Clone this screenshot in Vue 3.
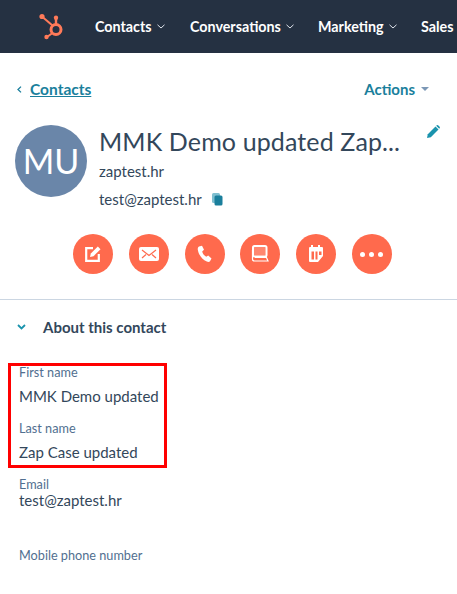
<template>
  <div class="page">
    <nav class="topbar">
      <svg class="logo" width="28" height="28" viewBox="0 0 28 28">
        <circle cx="18" cy="16.500" r="5" fill="none" stroke="#ff7a59" stroke-width="3" />
        <line x1="4.500" y1="4" x2="14.500" y2="12.500" stroke="#ff7a59" stroke-width="2" />
        <circle cx="4" cy="3.500" r="2.600" fill="#ff7a59" />
        <line x1="18" y1="6" x2="18" y2="11" stroke="#ff7a59" stroke-width="2.400" />
        <circle cx="18" cy="4.800" r="2.200" fill="#ff7a59" />
        <line x1="9" y1="24" x2="14.500" y2="20" stroke="#ff7a59" stroke-width="2" />
        <circle cx="8.500" cy="24" r="2.200" fill="#ff7a59" />
      </svg>
      <div v-for="item in navItems" :key="item.label" class="nav-item" :style="{ width: item.width + 'px' }">
        <span>{{ item.label }}</span>
        <svg v-if="item.arrow" width="8" height="5" viewBox="0 0 8 5">
          <path d="M.5.8 4 4 7.500.8" fill="none" stroke="#dfe3eb" stroke-width="1" />
        </svg>
      </div>
    </nav>

    <div class="crumbs">
      <div class="back">
        <svg width="5" height="7" viewBox="0 0 5 7">
          <path d="M4 .6 1 3.500 4 6.400" fill="none" stroke="#1a7f9c" stroke-width="1.300" />
        </svg>
        <a class="back-link">Contacts</a>
      </div>
      <div class="actions">
        <span>Actions</span>
        <svg width="8" height="4" viewBox="0 0 8 4"><path d="M0 0h8L4 4z" fill="#7c98b6" /></svg>
      </div>
    </div>

    <header class="profile">
      <div class="avatar">MU</div>
      <div class="identity">
        <h1>MMK Demo updated Zap...</h1>
        <p class="domain">zaptest.hr</p>
        <p class="mail">
          test@zaptest.hr
          <svg width="11" height="13" viewBox="0 0 11 13">
            <rect x="0" y="0" width="8" height="10" rx="1.500" fill="#7fbfd0" />
            <rect x="2.500" y="2.500" width="8" height="10" rx="1.500" fill="#1a7f9c" />
          </svg>
        </p>
      </div>
      <svg class="pencil" width="13" height="13" viewBox="0 0 13 13">
        <path d="M0 13l.8-3.800L8.500 1.500l3 3-7.700 7.700z" fill="#1a93ad" />
        <path d="M9.400.6a1.400 1.400 0 0 1 2 0l1 1a1.400 1.400 0 0 1 0 2l-.2.200-3-3z" fill="#1a93ad" />
      </svg>
    </header>

    <div class="quick-actions">
      <button class="circle">
        <svg width="18" height="18" viewBox="0 0 18 18">
          <path d="M9 3.200H2.200v12.600h12.600V9" fill="none" stroke="#fff" stroke-width="2.200" />
          <path d="M6 12l.8-3.500L13.800 1.500l2.700 2.700-7 7z" fill="#fff" />
        </svg>
      </button>
      <button class="circle">
        <svg width="20" height="14" viewBox="0 0 20 14">
          <rect width="20" height="14" rx="2" fill="#fff" />
          <path d="M3 3l7 5.500L17 3M3 11l4-3.500M17 11l-4-3.500" fill="none" stroke="#ff6a4d" stroke-width="1.200" />
        </svg>
      </button>
      <button class="circle">
        <svg width="16" height="18" viewBox="0 0 16 18">
          <path d="M2 1.500 5 .8l2 4-1.800 1.700c.5 2 2 4.300 4 5.300l2-1.300 3.300 3-1.500 2.800c-.7.800-2 .8-3.200.2C5 14.500 1.500 9.500.8 4.800.6 3.300 1 2 2 1.500z" fill="#fff" />
        </svg>
      </button>
      <button class="circle">
        <svg width="20" height="18" viewBox="0 0 20 18">
          <rect x="3" y="1" width="13.500" height="10.500" rx="1.500" fill="#ff6a4d" stroke="#fff" stroke-width="2" />
          <rect x="4" y="2" width="11.500" height="8.500" fill="#fff" opacity=".2" />
          <path d="M2.500 5v9a2 2 0 0 0 2 2H18l-1.500-3.500H5" fill="none" stroke="#fff" stroke-width="1.200" />
        </svg>
      </button>
      <button class="circle">
        <svg width="18" height="18" viewBox="0 0 18 18">
          <path d="M4 0h2v2h5V0h2v2h2a1 1 0 0 1 1 1v8l-5 6H3a1 1 0 0 1-1-1V3a1 1 0 0 1 1-1h1z" fill="#fff" />
          <path d="M4.500 6.500h2.500v8H4.500zM8.500 6.500h2v8h-2zM12 6.500h2.500v3.500H12z" fill="#ff6a4d" />
        </svg>
      </button>
      <button class="circle">
        <span class="dot"></span><span class="dot"></span><span class="dot"></span>
      </button>
    </div>

    <section class="about">
      <div class="about-head">
        <svg width="9" height="6" viewBox="0 0 9 6">
          <path d="M1 1l3.500 3.500L8 1" fill="none" stroke="#1a93ad" stroke-width="1.800" />
        </svg>
        <h2>About this contact</h2>
      </div>

      <div class="highlight">
        <div class="field">
          <label>First name</label>
          <div class="value">MMK Demo updated</div>
        </div>
        <div class="field second">
          <label>Last name</label>
          <div class="value">Zap Case updated</div>
        </div>
      </div>

      <div class="field email">
        <label>Email</label>
        <div class="value tight">test@zaptest.hr</div>
      </div>
      <div class="field phone">
        <label>Mobile phone number</label>
      </div>
    </section>
  </div>
</template>

<script setup>
const navItems = [
  { label: 'Contacts', width: 95, arrow: true },
  { label: 'Conversations', width: 128, arrow: true },
  { label: 'Marketing', width: 103, arrow: true },
  { label: 'Sales', width: 60, arrow: false },
]
</script>

<style>
html, body {
  margin: 0;
  overflow: hidden;
  background: #fff;
}
</style>

<style scoped>
.page {
  width: 457px;
  height: 594px;
  overflow: hidden;
  font-family: Lato, "Noto Sans", sans-serif;
  color: #33475b;
}

.topbar {
  display: flex;
  align-items: center;
  height: 53px;
  background: #253142;
  padding-left: 38px;
  box-sizing: border-box;
  white-space: nowrap;
}

.logo {
  flex: none;
  margin-right: 29px;
}

.nav-item {
  flex: none;
  display: flex;
  align-items: center;
  gap: 5px;
  color: #fff;
  font-size: 14.300px;
  font-weight: 700;
}

.crumbs {
  display: flex;
  justify-content: space-between;
  align-items: center;
  height: 20px;
  margin-top: 26px;
  padding: 0 28px 0 17px;
  font-size: 15.500px;
  font-weight: 700;
  color: #1a7f9c;
}

.back {
  display: flex;
  align-items: center;
  gap: 8px;
}

.back-link {
  text-decoration: underline;
}

.actions {
  display: flex;
  align-items: center;
  gap: 6px;
  font-size: 15px;
}

.profile {
  position: relative;
  display: flex;
  margin-top: 26px;
  padding-left: 15px;
  height: 90px;
}

.avatar {
  flex: none;
  width: 72px;
  height: 72px;
  border-radius: 50%;
  background: #6a86a9;
  color: #fff;
  font-size: 34px;
  line-height: 72px;
  text-align: center;
}

.identity {
  margin-left: 12px;
}

h1 {
  margin: 0;
  font-size: 25px;
  line-height: 32px;
  font-weight: 400;
  white-space: nowrap;
  letter-spacing: 0.12px;
}

.domain,
.mail {
  margin: 0;
  font-size: 15px;
  line-height: 20px;
}

.domain {
  margin-top: 4px;
}

.mail {
  margin-top: 8px;
  display: flex;
  align-items: center;
  gap: 10px;
}

.pencil {
  position: absolute;
  top: 0;
  right: 17px;
}

.quick-actions {
  display: flex;
  gap: 15.800px;
  margin-top: 19px;
  padding-left: 73px;
}

.circle {
  flex: none;
  display: flex;
  align-items: center;
  justify-content: center;
  gap: 4px;
  width: 40px;
  height: 40px;
  padding: 0;
  border: none;
  border-radius: 50%;
  background: #ff6a4d;
}

.dot {
  width: 5px;
  height: 5px;
  border-radius: 50%;
  background: #fff;
}

.about {
  margin-top: 25px;
  border-top: 1px solid #cbd6e2;
}

.about-head {
  display: flex;
  align-items: center;
  gap: 17px;
  height: 20px;
  margin-top: 17px;
  padding-left: 17px;
}

h2 {
  margin: 0;
  font-size: 15px;
  font-weight: 700;
}

.highlight {
  box-sizing: border-box;
  width: 159px;
  height: 105px;
  margin: 26px 0 0 8px;
  padding: 0 0 0 8px;
  border: 3px solid #f00;
}

label {
  display: block;
  font-size: 12.700px;
  line-height: 16px;
  color: #516f90;
}

.highlight label {
  line-height: 12px;
}

.value {
  margin-top: 8px;
  font-size: 15px;
  line-height: 20px;
}

.value.tight {
  margin-top: 0;
  line-height: 17px;
}

.field.second {
  margin-top: 16px;
}

.email,
.phone {
  padding-left: 19px;
}

.email {
  margin-top: 8px;
}

.phone {
  margin-top: 38px;
}
</style>
